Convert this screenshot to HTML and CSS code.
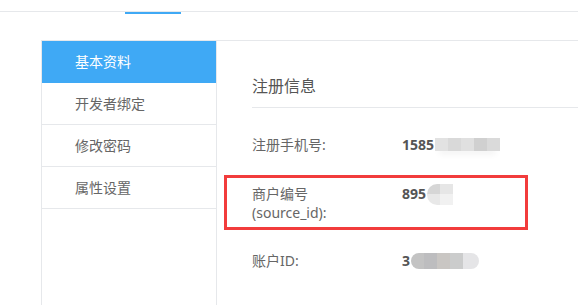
FILE: index.html
```html
<!DOCTYPE html>
<html lang="zh-CN">

<head>
    <meta charset="UTF-8">
    <meta name="viewport" content="width=device-width, initial-scale=1.0">
    <title>账户设置</title>
    <link rel="stylesheet" href="styles.css">
</head>

<body>
    <div class="tabs">
        <div class="tab active"></div>
    </div>

    <div class="panel">
        <ul class="side-menu">
            <li class="active">基本资料</li>
            <li>开发者绑定</li>
            <li>修改密码</li>
            <li>属性设置</li>
        </ul>

        <div class="content">
            <h2 class="section-title">注册信息</h2>
            <div class="info-list">
                <div class="info-row">
                    <div class="label">注册手机号:</div>
                    <div class="value">1585<span class="mask mask-phone"><i></i><i></i><i></i><i></i><i></i></span></div>
                </div>
                <div class="info-row highlight">
                    <div class="label">商户编号<br>(source_id):</div>
                    <div class="value">895<span class="mask mask-source"><i></i><i></i></span></div>
                </div>
                <div class="info-row">
                    <div class="label">账户ID:</div>
                    <div class="value">3<span class="mask mask-account"><i></i><i></i><i></i><i></i><i></i></span></div>
                </div>
            </div>
        </div>
    </div>
</body>

</html>
```

FILE: styles.css
```css
body {
    margin: 0;
    font-family: "Noto Sans", "Noto Sans CJK SC", sans-serif;
    font-size: 14px;
    color: #666;
    background-color: #fff;
    overflow: hidden;
}

.tabs {
    height: 11px;
    border-bottom: 1px solid #e6e8eb;
}

.tab {
    width: 56px;
    height: 12px;
    margin-left: 125px;
}

.tab.active {
    border-bottom: 2px solid #3fa9f5;
}

.panel {
    display: flex;
    margin: 28px 0 0 41px;
    height: 264px;
    border-top: 1px solid #e6e8eb;
    border-left: 1px solid #e6e8eb;
}

.side-menu {
    width: 174px;
    margin: 0;
    padding: 0;
    list-style: none;
    border-right: 1px solid #e6e8eb;
}

.side-menu li {
    height: 41px;
    line-height: 41px;
    padding-left: 33px;
    border-bottom: 1px solid #e6e8eb;
}

.side-menu li.active {
    color: #fff;
    background-color: #3fa9f5;
    border-bottom-color: #3fa9f5;
}

.content {
    flex: 1;
    padding: 33px 0 0 35px;
}

.section-title {
    margin: 0;
    padding-bottom: 9px;
    font-size: 16px;
    font-weight: normal;
    line-height: 24px;
    color: #555;
    border-bottom: 1px solid #e6e8eb;
}

.info-list {
    padding-top: 6px;
}

.info-row {
    display: flex;
    margin-top: 21px;
    line-height: 20px;
}

.info-row .label {
    width: 150px;
}

.info-row .value {
    display: flex;
    align-items: flex-start;
    font-weight: bold;
    color: #555;
}

.info-row.highlight {
    width: 304px;
    box-sizing: border-box;
    margin-top: 20px;
    margin-left: -28px;
    padding: 6px 0 5px 25px;
    line-height: 19px;
    border: 3px solid #f23c3c;
}

.info-row.highlight .label {
    width: 150px;
}

/* mosaic over the hidden part of the numbers */
.mask {
    display: inline-flex;
    overflow: hidden;
}

.mask i {
    display: block;
    width: 13px;
}

.mask-phone {
    margin: 3px 0 0 1px;
    height: 13px;
    box-shadow: 0 7px 6px -4px #f0f0f0;
}

.mask-phone i:nth-child(1) { background: #e2e2e2; }
.mask-phone i:nth-child(2) { background: #d9d9d9; }
.mask-phone i:nth-child(3) { background: #e0e0e0; }
.mask-phone i:nth-child(4) { background: #d0d0d0; }
.mask-phone i:nth-child(5) { background: #dadada; }

.mask-source {
    margin: 0 0 0 1px;
    height: 21px;
    border-radius: 10px 0 0 10px;
    background: linear-gradient(#d6d6d6 50%, #e8e8e8 50%);
}

.mask-source i:nth-child(2) {
    background: linear-gradient(#e6e6e6 50%, #f1f1f1 50%);
}

.mask-account {
    margin: 2px 0 0 1px;
    height: 16px;
    border-radius: 8px;
}

.mask-account i:nth-child(1) { background: #c3c3c3; }
.mask-account i:nth-child(2) { background: #bdbdbf; }
.mask-account i:nth-child(3) { background: #c9c6c3; }
.mask-account i:nth-child(4) { background: #cbcccc; }
.mask-account i:nth-child(5) { background: #e5e5e7; width: 16px; }
```
